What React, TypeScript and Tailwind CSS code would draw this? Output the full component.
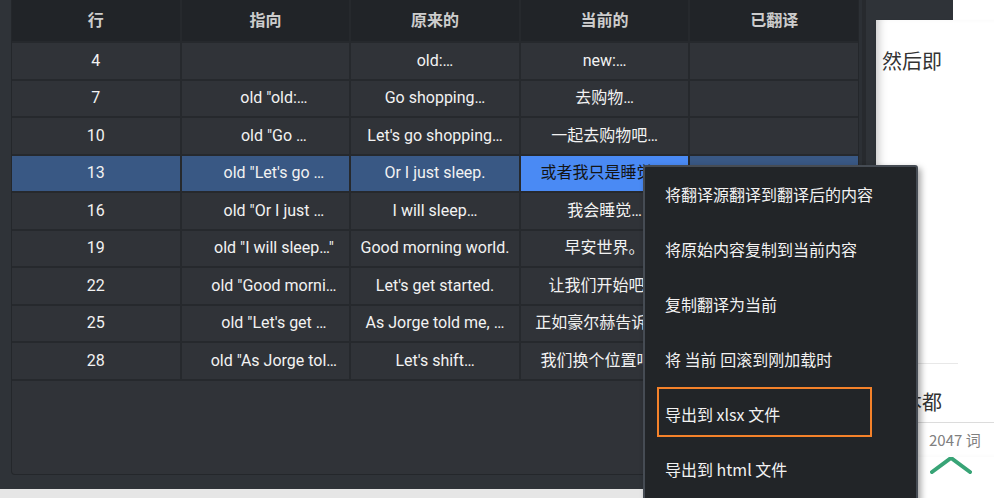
import React from "react";

const rows: { n: string; a: string; b: string; c: string; sel?: boolean }[] = [
  { n: "4", a: "", b: "old:…", c: "new:…" },
  { n: "7", a: "old \"old:…", b: "Go shopping…", c: "去购物…" },
  { n: "10", a: "old \"Go …", b: "Let's go shopping…", c: "一起去购物吧…" },
  { n: "13", a: "old \"Let's go …", b: "Or I just sleep.", c: "或者我只是睡觉。", sel: true },
  { n: "16", a: "old \"Or I just …", b: "I will sleep…", c: "我会睡觉…" },
  { n: "19", a: "old \"I will sleep…\"", b: "Good morning world.", c: "早安世界。" },
  { n: "22", a: "old \"Good morni…", b: "Let's get started.", c: "让我们开始吧。" },
  { n: "25", a: "old \"Let's get …", b: "As Jorge told me, …", c: "正如豪尔赫告诉我…" },
  { n: "28", a: "old \"As Jorge tol…", b: "Let's shift…", c: "我们换个位置吧。" },
];

const menuItems = [
  "将翻译源翻译到翻译后的内容",
  "将原始内容复制到当前内容",
  "复制翻译为当前",
  "将 当前 回滚到刚加载时",
  "导出到 xlsx 文件",
  "导出到 html 文件",
];

export default function App() {
  return (
    <div className="relative w-[994px] h-[498px] overflow-hidden bg-white flex font-['Roboto','Noto_Sans_CJK_SC',sans-serif]">
      {/* Left dark app area */}
      <div className="w-[876px] h-[498px] flex flex-col">
        <div className="h-[489px] bg-[#2f3338] flex">
          <div className="w-[11px]" />
          {/* table */}
          <div className="w-[848px] h-[475px] border border-t-0 border-[#24272b] rounded-b-[4px] bg-[#303338] overflow-hidden flex flex-col">
            <div className="grid grid-cols-5 gap-[2px] bg-[#26292d] pb-[2px]">
              {["行", "指向", "原来的", "当前的", "已翻译"].map((h) => (
                <div
                  key={h}
                  className="h-[41px] bg-[#212428] flex items-center justify-center text-[16px] font-bold text-[#cdcdcd]"
                >
                  {h}
                </div>
              ))}
              {rows.map((r) => {
                const base = r.sel ? "bg-[#395884]" : "bg-[#303338]";
                const cell =
                  "h-[35.5px] flex items-center justify-center text-[16px] whitespace-nowrap overflow-hidden";
                return (
                  <React.Fragment key={r.n}>
                    <div className={`${cell} ${base} text-[#f2f2f2]`}>{r.n}</div>
                    <div className={`${cell} ${base} text-[#f2f2f2] pl-[17px]`}>{r.a}</div>
                    <div className={`${cell} ${base} text-[#f2f2f2]`}>{r.b}</div>
                    <div
                      className={`${cell} ${
                        r.sel ? "bg-[#4a8af4] text-[#141414]" : "bg-[#303338] text-[#f2f2f2]"
                      }`}
                    >
                      {r.c}
                    </div>
                    <div className={`${cell} ${base}`} />
                  </React.Fragment>
                );
              })}
            </div>
          </div>
          {/* scrollbar gutter */}
          <div className="w-[3px] bg-[#2c3035]" />
          <div className="w-[4px] bg-[#272a2e]" />
          <div className="flex-1 bg-[#2f3338]" />
        </div>
        <div className="h-[9px] bg-[#e6e6e6]" />
      </div>

      {/* Right side panel */}
      <div className="w-[118px] h-[498px] flex flex-col bg-white">
        <div className="h-[20px] flex">
          <div className="w-[77px] bg-[#2f3338]" />
          <div className="flex-1 bg-white" />
        </div>
        <div className="h-[437px] bg-white flex flex-col shadow-[inset_9px_0_8px_-6px_rgba(0,0,0,0.22),0_2px_3px_rgba(0,0,0,0.12)]">
          <div className="pl-[6px] pt-[28px] text-[20px] leading-[26px] text-[#333] font-['Noto_Sans_CJK_SC',sans-serif]">
            然后即
          </div>
          <div className="flex-1" />
          <div className="mr-[36px] border-t border-[#e8e8e8]" />
          <div className="h-[58px] flex items-center pl-[26px] pt-[18px] text-[20px] text-[#333] font-['Noto_Sans_CJK_SC',sans-serif]">
            本都
          </div>
          <div className="h-[35px] border-t border-[#dcdcdc] flex items-center pl-[53px] text-[15px] text-[#808080] font-['Noto_Sans_CJK_SC',sans-serif]">
            2047 词
          </div>
        </div>
        <div className="flex-1 bg-white flex justify-start pl-[54px]">
          <svg width="42" height="18" viewBox="0 0 42 18">
            <polyline
              points="2,15 21,1 40,15"
              fill="none"
              stroke="#38a476"
              strokeWidth="4"
              strokeLinecap="round"
              strokeLinejoin="round"
            />
          </svg>
        </div>
      </div>

      {/* Context menu */}
      <div className="absolute left-[643px] top-[165px] w-[275px] h-[345px] bg-[#222528] border-2 border-[#464c54] rounded-[3px] shadow-[3px_3px_6px_rgba(0,0,0,0.35)] flex flex-col gap-[5px] font-['Noto_Sans_CJK_SC',sans-serif]">
        {menuItems.map((m, i) => (
          <div
            key={m}
            className={`ml-[12px] w-[215px] h-[50px] flex items-center pl-[6px] border-2 text-[16px] text-[#f2f2f2] whitespace-nowrap ${
              i === 4 ? "border-[#f5822a]" : "border-transparent"
            }`}
          >
            <span className="pt-[4px]">{m}</span>
          </div>
        ))}
      </div>
    </div>
  );
}
